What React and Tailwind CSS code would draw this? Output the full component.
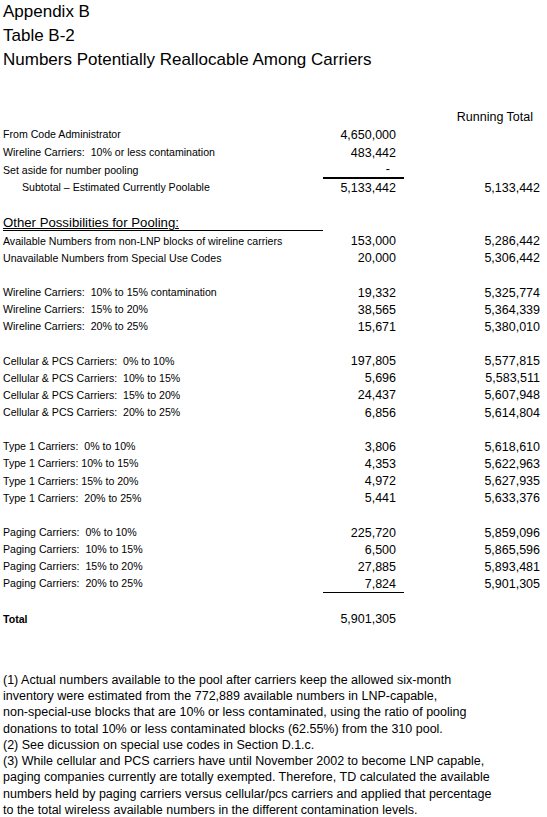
import React from "react";

const F = { fontFamily: '"Liberation Sans", Arial, sans-serif' };

function Row({ label, a, b, h = "h-[17.15px]", labelCls = "text-[10.6px]", aCls = "", bCls = "", indent = false, bold = false }) {
  return (
    <div className={`flex items-center ${h}`}>
      <div className={`w-[320px] ${labelCls} ${indent ? "pl-[19px]" : ""} ${bold ? "font-bold" : ""} whitespace-pre`}>{label}</div>
      <div className={`w-[81px] h-full flex items-center justify-end pr-[8px] text-[12.5px] ${aCls}`}>{a}</div>
      <div className={`w-[136px] text-right text-[12.5px] ${bCls}`}>{b}</div>
    </div>
  );
}

const Blank = ({ h = "h-[17.15px]" }) => <div className={h} />;

export default function App() {
  const footnotes = [
    "(1) Actual numbers available to the pool after carriers keep the allowed six-month",
    "inventory were estimated from the 772,889 available numbers in LNP-capable,",
    "non-special-use blocks that are 10% or less contaminated, using the ratio of pooling",
    "donations to total 10% or less contaminated blocks (62.55%) from the 310 pool.",
    "(2) See dicussion on special use codes in Section D.1.c.",
    "(3) While cellular and PCS carriers have until November 2002 to become LNP capable,",
    "paging companies currently are totally exempted. Therefore, TD calculated the available",
    "numbers held by paging carriers versus cellular/pcs carriers and applied that percentage",
    "to the total wireless available numbers in the different contamination levels.",
  ];
  return (
    <div className="w-[547px] h-[817px] bg-white text-black overflow-hidden pl-[3px]" style={F}>
      <div className="text-[17px] leading-[24px]">
        <div>Appendix B</div>
        <div>Table B-2</div>
        <div>Numbers Potentially Reallocable Among Carriers</div>
      </div>

      <div className="mt-[37px]">
        <Row label="" a="" b="Running Total" h="h-[17px]" bCls="pr-[7px]" />
        <Row label="From Code Administrator" a="4,650,000" b="" h="h-[18px]" />
        <Row label="Wireline Carriers:  10% or less contamination" a="483,442" b="" h="h-[18px]" />
        <Row label="Set aside for number pooling" a={<span className="pr-[6px]">-</span>} b="" h="h-[17px]" aCls="border-b-2 border-black" />
        <Row label="Subtotal – Estimated Currently Poolable" a="5,133,442" b="5,133,442" h="h-[18px]" indent />
        <Blank h="h-[17px]" />
        <div className="h-[17px] w-[320px] border-b border-black flex items-end text-[13.2px] leading-[15px] underline whitespace-nowrap">
          Other Possibilities for Pooling:
        </div>
        <div className="h-[2px]" />
        <Row label="Available Numbers from non-LNP blocks of wireline carriers" a="153,000" b="5,286,442" />
        <Row label="Unavailable Numbers from Special Use Codes" a="20,000" b="5,306,442" />
        <Blank />
        <Row label="Wireline Carriers:  10% to 15% contamination" a="19,332" b="5,325,774" />
        <Row label="Wireline Carriers:  15% to 20%" a="38,565" b="5,364,339" />
        <Row label="Wireline Carriers:  20% to 25%" a="15,671" b="5,380,010" />
        <Blank />
        <Row label="Cellular & PCS Carriers:  0% to 10%" a="197,805" b="5,577,815" />
        <Row label="Cellular & PCS Carriers:  10% to 15%" a="5,696" b="5,583,511" />
        <Row label="Cellular & PCS Carriers:  15% to 20%" a="24,437" b="5,607,948" />
        <Row label="Cellular & PCS Carriers:  20% to 25%" a="6,856" b="5,614,804" />
        <Blank />
        <Row label="Type 1 Carriers:  0% to 10%" a="3,806" b="5,618,610" />
        <Row label="Type 1 Carriers: 10% to 15%" a="4,353" b="5,622,963" />
        <Row label="Type 1 Carriers: 15% to 20%" a="4,972" b="5,627,935" />
        <Row label="Type 1 Carriers:  20% to 25%" a="5,441" b="5,633,376" />
        <Blank />
        <Row label="Paging Carriers:  0% to 10%" a="225,720" b="5,859,096" />
        <Row label="Paging Carriers:  10% to 15%" a="6,500" b="5,865,596" />
        <Row label="Paging Carriers:  15% to 20%" a="27,885" b="5,893,481" />
        <Row label="Paging Carriers:  20% to 25%" a="7,824" b="5,901,305" aCls="border-b border-black" />
        <Blank h="h-[18px]" />
        <Row label="Total" a="5,901,305" b="" h="h-[17px]" bold />
      </div>

      <div className="mt-[44px] text-[12.5px] leading-[16.25px] whitespace-pre">
        {footnotes.map((l, i) => (
          <div key={i}>{l}</div>
        ))}
      </div>
    </div>
  );
}
